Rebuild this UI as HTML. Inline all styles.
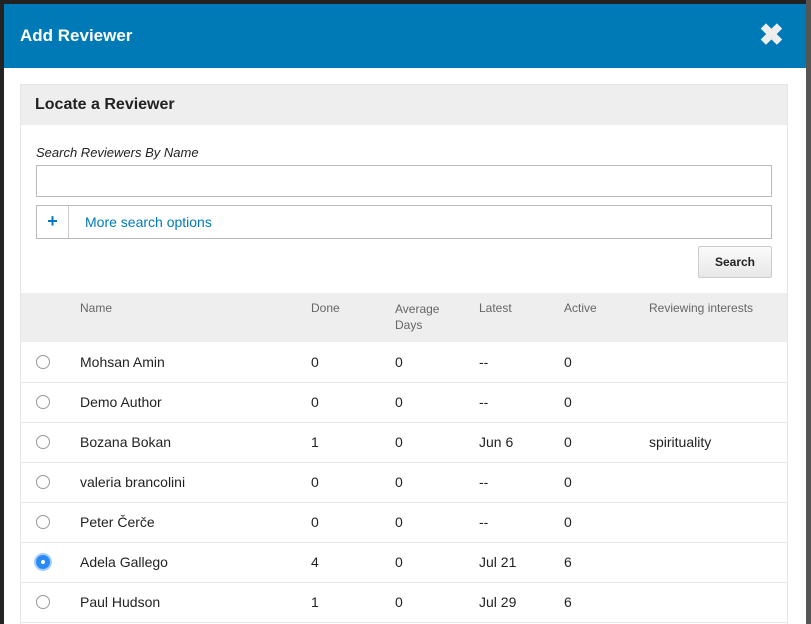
<!DOCTYPE html><html style="height:624px;overflow:hidden"><head><style>
body{margin:0;width:811px;height:624px;overflow:hidden;background:#222;font-family:"Liberation Sans",sans-serif;position:relative}
.strip{position:absolute;left:806px;top:0;width:5px;height:624px;background:#555}
.modal{position:absolute;left:4px;top:4px;width:802px;height:620px;background:#fff;overflow:hidden}
.hd{height:64px;background:#007ab7;color:#fff;font-weight:bold;font-size:17px;line-height:64px;padding-left:16px;position:relative}
.x{position:absolute;right:22px;top:0;font-size:30px;color:#eee}
.panel{position:absolute;left:16px;top:80px;width:768px;height:540px;background:#fff;border:1px solid #e4e4e4;border-bottom:none;box-sizing:border-box}
.ph{height:40px;background:#eee;line-height:40px;padding-left:14px;font-weight:bold;font-size:16px;color:#222}
.lbl{position:absolute;left:15px;top:60px;font-style:italic;font-size:13px;color:#222}
.inp{position:absolute;left:15px;top:80px;width:736px;height:32px;border:1px solid #bbb;box-sizing:border-box}
.more{position:absolute;left:15px;top:120px;width:736px;height:34px;border:1px solid #bbb;box-sizing:border-box}
.more .p{position:absolute;left:0;top:0;width:31px;height:32px;border-right:1px solid #ccc;color:#007ab7;font-weight:bold;font-size:18px;text-align:center;line-height:31px}
.more .t{position:absolute;left:48px;top:0;line-height:32px;color:#007ab7;font-size:14px}
.btn{position:absolute;left:677px;top:161px;width:74px;height:32px;border:1px solid #ccc;box-sizing:border-box;background:linear-gradient(#fafafa,#e8e8e8);font-weight:bold;font-size:12px;text-align:center;line-height:30px;color:#222;border-radius:2px}
.th{position:absolute;left:0;top:208px;width:766px;height:49px;background:#eee;font-size:12px;color:#666}
.th span,.r span{position:absolute}
.r{position:absolute;left:0;width:766px;height:40px;border-bottom:1px solid #e8e8e8;font-size:14px;color:#222}
.r span{top:12px}
.rad{position:absolute;left:15px;top:13px;width:12px;height:12px;border:1px solid #999;border-radius:50%}
.on{border:none;background:#2a8af5;width:14px;height:14px;box-shadow:0 0 0 2px #a9cdfb}
.on:after{content:"";position:absolute;left:5px;top:5px;width:4px;height:4px;border-radius:50%;background:#fff}
</style></head><body><div class="strip"></div>
<div class="modal"><div class="hd">Add Reviewer<span class="x">✖</span></div>
<div class="panel"><div class="ph">Locate a Reviewer</div>
<div class="lbl">Search Reviewers By Name</div><div class="inp"></div>
<div class="more"><div class="p">+</div><div class="t">More search options</div></div>
<div class="btn">Search</div>
<div class="th"><span style="left:59px;top:8px">Name</span><span style="left:290px;top:8px">Done</span><span style="left:374px;top:8px;line-height:16px">Average<br>Days</span><span style="left:458px;top:8px">Latest</span><span style="left:543px;top:8px">Active</span><span style="left:628px;top:8px">Reviewing interests</span></div>
<div class="r" style="top:257px"><div class="rad"></div><span style="left:59px">Mohsan Amin</span><span style="left:290px">0</span><span style="left:374px">0</span><span style="left:458px">--</span><span style="left:543px">0</span></div>
<div class="r" style="top:297px"><div class="rad"></div><span style="left:59px">Demo Author</span><span style="left:290px">0</span><span style="left:374px">0</span><span style="left:458px">--</span><span style="left:543px">0</span></div>
<div class="r" style="top:337px"><div class="rad"></div><span style="left:59px">Bozana Bokan</span><span style="left:290px">1</span><span style="left:374px">0</span><span style="left:458px">Jun 6</span><span style="left:543px">0</span><span style="left:628px">spirituality</span></div>
<div class="r" style="top:377px"><div class="rad"></div><span style="left:59px">valeria brancolini</span><span style="left:290px">0</span><span style="left:374px">0</span><span style="left:458px">--</span><span style="left:543px">0</span></div>
<div class="r" style="top:417px"><div class="rad"></div><span style="left:59px">Peter Čerče</span><span style="left:290px">0</span><span style="left:374px">0</span><span style="left:458px">--</span><span style="left:543px">0</span></div>
<div class="r" style="top:457px"><div class="rad on"></div><span style="left:59px">Adela Gallego</span><span style="left:290px">4</span><span style="left:374px">0</span><span style="left:458px">Jul 21</span><span style="left:543px">6</span></div>
<div class="r" style="top:497px"><div class="rad"></div><span style="left:59px">Paul Hudson</span><span style="left:290px">1</span><span style="left:374px">0</span><span style="left:458px">Jul 29</span><span style="left:543px">6</span></div>
</div></div></body></html>
